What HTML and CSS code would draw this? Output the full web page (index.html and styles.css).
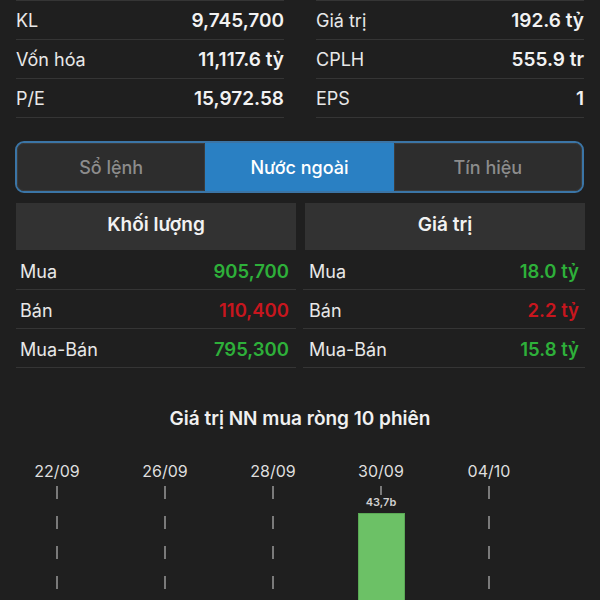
FILE: index.html
```html
<!DOCTYPE html>
<html lang="vi">
<head>
    <meta charset="UTF-8">
    <meta name="viewport" content="width=device-width, initial-scale=1.0">
    <title>Nước ngoài</title>
    <link rel="stylesheet" href="styles.css">
</head>
<body>
    <div class="stats">
        <div class="stat-col">
            <div class="stat-row"><span>KL</span><b>9,745,700</b></div>
            <div class="stat-row"><span>Vốn hóa</span><b>11,117.6 tỷ</b></div>
            <div class="stat-row"><span>P/E</span><b>15,972.58</b></div>
        </div>
        <div class="stat-col">
            <div class="stat-row"><span>Giá trị</span><b>192.6 tỷ</b></div>
            <div class="stat-row"><span>CPLH</span><b>555.9 tr</b></div>
            <div class="stat-row"><span>EPS</span><b>1</b></div>
        </div>
    </div>

    <div class="tabs">
        <div class="tab">Sổ lệnh</div>
        <div class="tab active">Nước ngoài</div>
        <div class="tab">Tín hiệu</div>
    </div>

    <div class="foreign">
        <div class="fcol left">
            <div class="fhead">Khối lượng</div>
            <div class="frow"><span>Mua</span><b class="up">905,700</b></div>
            <div class="frow"><span>Bán</span><b class="down">110,400</b></div>
            <div class="frow"><span>Mua-Bán</span><b class="up">795,300</b></div>
        </div>
        <div class="fcol right">
            <div class="fhead">Giá trị</div>
            <div class="frow"><span>Mua</span><b class="up">18.0 tỷ</b></div>
            <div class="frow"><span>Bán</span><b class="down">2.2 tỷ</b></div>
            <div class="frow"><span>Mua-Bán</span><b class="up">15.8 tỷ</b></div>
        </div>
    </div>

    <div class="chart">
        <h3>Giá trị NN mua ròng 10 phiên</h3>
        <div class="days">
            <div class="day"><div class="date">22/09</div><div class="plot"></div></div>
            <div class="day"><div class="date">26/09</div><div class="plot"></div></div>
            <div class="day"><div class="date">28/09</div><div class="plot"></div></div>
            <div class="day"><div class="date">30/09</div>
                <div class="plot">
                    <div class="bar-label">43,7b</div>
                    <div class="bar"></div>
                </div>
            </div>
            <div class="day"><div class="date">04/10</div><div class="plot"></div></div>
        </div>
    </div>
</body>
</html>
```

FILE: styles.css
```css
body{
    margin: 0;
    background: #1f1f1f;
    color: #e8e8e8;
    font-family: Inter, "Noto Sans", sans-serif;
    overflow: hidden;
}
b{font-weight: 600;}

.stats{display: grid; grid-template-columns: 268px 268px; gap: 32px; padding: 0 16px;}
.stat-col{border-top: 1px solid #353535;}
.stat-row{display: flex; justify-content: space-between; align-items: center; height: 38px; border-bottom: 1px solid #353535; font-size: 18px;}
.stat-row b{color: #f2f2f2; font-size: 19px;}

.tabs{display: flex; margin: 23px 0 0 15px; width: 565px; height: 48px; border: 2px solid #3b75a6; border-radius: 9px; padding: 0; overflow: hidden; background: #2d2d2d;}
.tab{flex: 1; display: flex; align-items: center; justify-content: center; font-size: 18px; font-weight: 500; color: #8c8c8c; border: 1px solid #3c3c3c;}
.tab:first-child{border-radius: 7px 0 0 7px;}
.tab:last-child{border-radius: 0 7px 7px 0;}
.tab.active{background: #2a80c3; color: #fff; border-color: #2a80c3;}

.foreign{display: grid; grid-template-columns: 280px 280px; gap: 9px; padding: 0 16px; margin-top: 10px;}
.fhead{height: 47px; margin-bottom: 1px; padding-bottom: 4px; box-sizing: border-box; background: #323232; display: flex; align-items: center; justify-content: center; font-size: 19px; font-weight: 600; color: #f2f2f2;}
.frow{display: flex; justify-content: space-between; align-items: center; height: 39px; border-bottom: 1px solid #353535; font-size: 18px; padding-top: 2px; box-sizing: border-box;}
.frow b{font-size: 18.5px;}
.left .frow{padding-left: 4px; padding-right: 7px;}
.right .frow{padding-left: 6px; padding-right: 6px; margin-left: -2px;}
.up{color: #2eb03a;}
.down{color: #c8161e;}

.chart{margin-top: 39px;}
.chart h3{margin: 0; text-align: center; font-size: 19px; line-height: 24px; font-weight: 600; color: #f0f0f0;}
.days{display: flex; padding-left: 3px; margin-top: 30px;}
.day{width: 108px; display: flex; flex-direction: column; align-items: center;}
.date{font-size: 16px; line-height: 20px; color: #dedede;}
.plot{margin-top: 5px; height: 120px; width: 100%; display: flex; flex-direction: column; align-items: center;
    background: repeating-linear-gradient(to bottom, #7a7a7a 0 13px, transparent 13px 30px) center top / 2px 100% no-repeat;}
.bar-label{margin-top: 9px; font-size: 11px; line-height: 14px; font-weight: 600; color: #cfcfcf; background: #1f1f1f;}
.bar{margin-top: 4px; width: 47px; height: 100px; background: #6cc166; border: 1px solid #5aa955; box-sizing: border-box;}
```
